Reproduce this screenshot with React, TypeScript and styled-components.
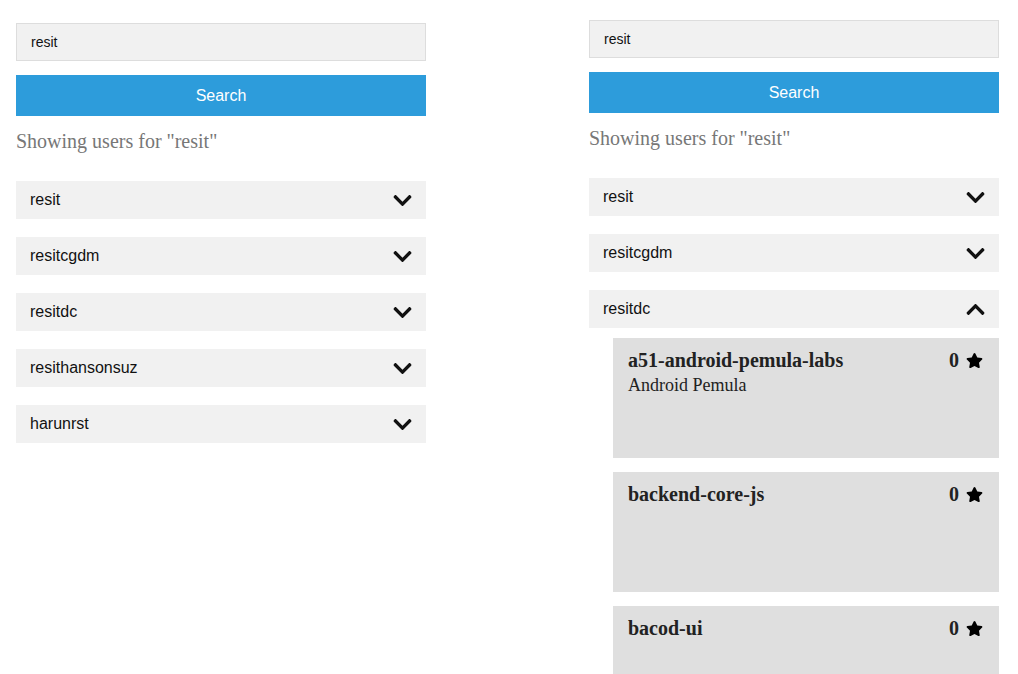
import React from "react";
import styled, { createGlobalStyle } from "styled-components";
import { FaChevronDown, FaChevronUp, FaStar } from "react-icons/fa";

const GlobalStyle = createGlobalStyle`
  html, body { margin: 0; padding: 0; overflow: hidden; background: #fff; }
  body { font-family: "Liberation Serif", "Times New Roman", serif; }
`;

const Page = styled.div`
  display: flex;
  align-items: flex-start;
  padding-left: 16px;
  gap: 163px;
  height: 674px;
`;

const Column = styled.div<{ $top: number }>`
  width: 410px;
  padding-top: ${(p) => p.$top}px;
  display: flex;
  flex-direction: column;
`;

const SearchInput = styled.input`
  box-sizing: border-box;
  width: 100%;
  height: 38px;
  border: 1px solid #dddddd;
  background: #f1f1f1;
  padding: 0 14px;
  font-family: "Liberation Sans", Arial, sans-serif;
  font-size: 14px;
  color: #111;
  outline: none;
`;

const SearchButton = styled.button`
  margin-top: 14px;
  height: 41px;
  width: 100%;
  border: none;
  background: #2d9cdb;
  color: #fff;
  font-family: "Liberation Sans", Arial, sans-serif;
  font-size: 16px;
  cursor: pointer;
`;

const ResultHeading = styled.p`
  margin: 14px 0 0;
  font-size: 20px;
  line-height: 23px;
  color: #777777;
`;

const UserList = styled.div`
  margin-top: 28px;
  display: flex;
  flex-direction: column;
  gap: 18px;
`;

const UserBlock = styled.div`
  display: flex;
  flex-direction: column;
`;

const UserRow = styled.div`
  height: 38px;
  box-sizing: border-box;
  display: flex;
  align-items: center;
  justify-content: space-between;
  padding: 0 13px 0 14px;
  background: #f1f1f1;
  font-family: "Liberation Sans", Arial, sans-serif;
  font-size: 16px;
  color: #111;
`;

const RepoList = styled.div`
  margin-top: 10px;
  margin-left: 24px;
  display: flex;
  flex-direction: column;
  gap: 14px;
`;

const RepoCard = styled.div`
  box-sizing: border-box;
  height: 120px;
  flex-shrink: 0;
  background: #dfdfdf;
  padding: 11px 16px 10px 15px;
`;

const RepoHeader = styled.div`
  display: flex;
  align-items: center;
  justify-content: space-between;
`;

const RepoTitle = styled.h3`
  margin: 0;
  font-size: 20px;
  line-height: 23px;
  font-weight: bold;
  color: #222;
`;

const Stars = styled.div`
  display: flex;
  align-items: center;
  gap: 7px;
  font-size: 20px;
  font-weight: bold;
  color: #222;
`;

const RepoDesc = styled.p`
  margin: 3px 0 0;
  font-size: 18px;
  line-height: 21px;
  color: #222;
`;

type Repo = { name: string; desc?: string; stars: number };

const users = ["resit", "resitcgdm", "resitdc", "resithansonsuz", "harunrst"];

const repos: Repo[] = [
  { name: "a51-android-pemula-labs", desc: "Android Pemula", stars: 0 },
  { name: "backend-core-js", stars: 0 },
  { name: "bacod-ui", stars: 0 },
];

function Panel({ top, open }: { top: number; open?: string }) {
  return (
    <Column $top={top}>
      <SearchInput defaultValue="resit" />
      <SearchButton>Search</SearchButton>
      <ResultHeading>Showing users for "resit"</ResultHeading>
      <UserList>
        {users.map((u) => (
          <UserBlock key={u}>
            <UserRow>
              <span>{u}</span>
              {open === u ? <FaChevronUp size={21} color="#111" /> : <FaChevronDown size={21} color="#111" />}
            </UserRow>
            {open === u && (
              <RepoList>
                {repos.map((r) => (
                  <RepoCard key={r.name}>
                    <RepoHeader>
                      <RepoTitle>{r.name}</RepoTitle>
                      <Stars>
                        <span>{r.stars}</span>
                        <FaStar size={17} color="#000" />
                      </Stars>
                    </RepoHeader>
                    {r.desc && <RepoDesc>{r.desc}</RepoDesc>}
                  </RepoCard>
                ))}
              </RepoList>
            )}
          </UserBlock>
        ))}
      </UserList>
    </Column>
  );
}

export default function App() {
  return (
    <>
      <GlobalStyle />
      <Page>
        <Panel top={23} />
        <Panel top={20} open="resitdc" />
      </Page>
    </>
  );
}
